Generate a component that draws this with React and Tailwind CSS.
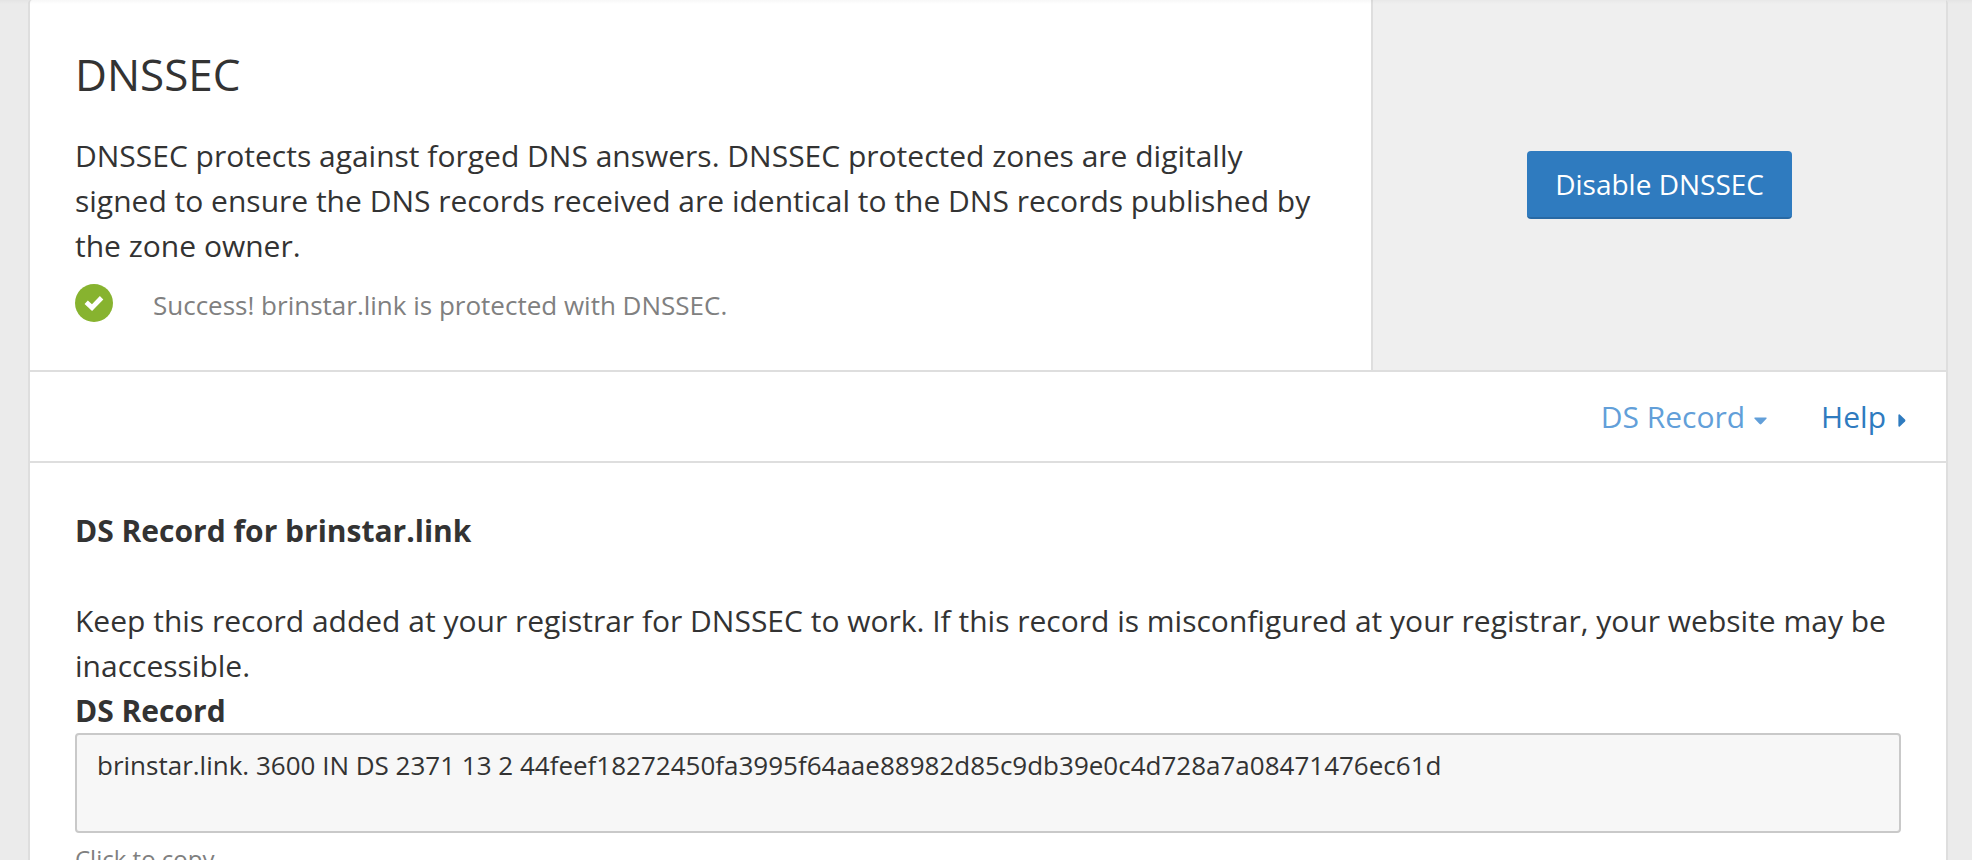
export default function App() {
  return (
    <div className="relative h-screen overflow-hidden bg-[#ebebeb] pr-[24px] pl-[28px] font-['Open_Sans',sans-serif] text-[30px] leading-[45px] text-[#333333]">
      <div className="pointer-events-none absolute inset-x-0 top-0 h-1 bg-gradient-to-b from-black/3 to-transparent" />
      <main className="min-h-full rounded-t-[4px] border-x-2 border-[#dedede] bg-white">
        <section className="flex border-b-2 border-[#dedede]">
          <div className="w-[70%] px-[45px] pt-[46px] pb-[44px]">
            <h1 className="mb-[30px] text-[44px] leading-[57px]">DNSSEC</h1>
            <p>
              DNSSEC protects against forged DNS answers. DNSSEC protected zones are digitally signed to
              ensure the DNS records received are identical to the DNS records published by the zone owner.
            </p>
            <div className="mt-4 flex items-start gap-[40px]">
              <svg viewBox="0 0 38 38" className="size-[38px] shrink-0" aria-hidden="true">
                <circle cx="19" cy="19" r="19" fill="#87b32f" />
                <path d="M11.2 18.2 L17 23.6 L26.6 13.8" fill="none" stroke="#fff" strokeWidth="4.8" />
              </svg>
              <p className="text-[26px] leading-[42px] text-[#808080]">
                Success! brinstar.link is protected with DNSSEC.
              </p>
            </div>
          </div>
          <div className="flex w-[30%] items-center justify-center border-l-2 border-[#dedede] bg-[#efefef]">
            <button
              type="button"
              className="rounded-[4px] border-b-2 border-[#2869a4] bg-[#2f7bbf] px-[28px] py-[12px] text-[28px] leading-[42px] text-white"
            >
              Disable DNSSEC
            </button>
          </div>
        </section>

        <nav className="flex justify-end gap-[54px] border-b-2 border-[#dedede] px-[40px] py-[22px]">
          <a href="#ds-record" className="flex items-center gap-[9px] text-[#629fd9]">
            DS Record
            <svg viewBox="0 0 13 8" className="mt-2 h-2 w-[13px]" aria-hidden="true">
              <path d="M1 0.4h11q1.2 0.4 0.4 1.4L7.4 7q-0.9 0.8-1.8 0L0.6 1.8Q-0.2 0.8 1 0.4Z" fill="currentColor" />
            </svg>
          </a>
          <a href="#help" className="flex items-center gap-[12px] text-[#2f7bbf]">
            Help
            <svg viewBox="0 0 8 13" className="mt-2 h-[13px] w-2" aria-hidden="true">
              <path d="M0.4 1q0.4-1.2 1.4-0.4L7 5.6q0.8 0.9 0 1.8L1.8 12.4Q0.8 13.2 0.4 12Z" fill="currentColor" />
            </svg>
          </a>
        </nav>

        <section id="ds-record" className="px-[45px] pt-[45px]">
          <h2 className="mb-[45px] font-bold">DS Record for brinstar.link</h2>
          <p>
            Keep this record added at your registrar for DNSSEC to work. If this record is misconfigured at
            your registrar, your website may be inaccessible.
          </p>
          <label htmlFor="record" className="block font-bold">
            DS Record
          </label>
          <textarea
            id="record"
            readOnly
            rows={1}
            className="block h-[100px] w-full resize-none overflow-hidden rounded-[4px] border-2 border-[#c9c9c9] bg-[#f7f7f7] px-[20px] py-[11px] text-[26px] leading-[39px] text-[#333333] outline-none"
            defaultValue="brinstar.link. 3600 IN DS 2371 13 2 44feef18272450fa3995f64aae88982d85c9db39e0c4d728a7a08471476ec61d"
          />
          <p className="mt-2 text-[24px] leading-[36px] text-[#808080]">Click to copy</p>
        </section>
      </main>
    </div>
  );
}
